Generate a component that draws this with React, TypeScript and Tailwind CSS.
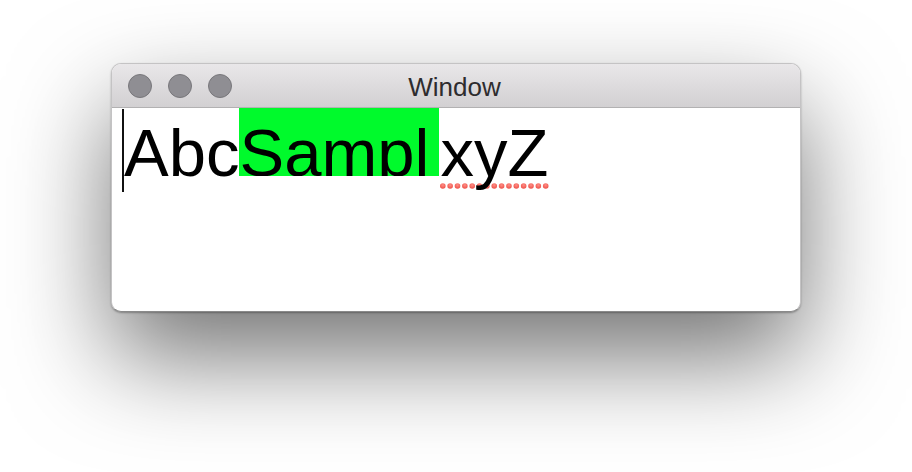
import React from "react";

function Dots() {
  const xs = Array.from({ length: 15 }, (_, i) => 2.8 + i * 7.35);
  return (
    <svg width="112" height="6" viewBox="0 0 112 6" className="block">
      <defs>
        <radialGradient id="dg" cx="50%" cy="35%" r="60%">
          <stop offset="0%" stopColor="#ff8d85" />
          <stop offset="100%" stopColor="#ee544c" />
        </radialGradient>
      </defs>
      {xs.map((x, i) => (
        <circle key={i} cx={x} cy={3} r={2.8} fill="url(#dg)" />
      ))}
    </svg>
  );
}

export default function App() {
  return (
    <div className="w-[912px] h-[472px] bg-white pt-[63px] pl-[111px] overflow-hidden">
      <div
        className="w-[690px] h-[249px] rounded-[10px] bg-white flex flex-col overflow-hidden border border-[#c4c3c4] border-b-[#8a8a8a] shadow-[0_45px_100px_rgba(0,0,0,0.55),0_1px_2px_rgba(0,0,0,0.3)]"
        style={{ fontFamily: '"Liberation Sans", Arial, sans-serif' }}
      >
        <div className="h-[44px] shrink-0 grid grid-cols-[1fr_auto_1fr] items-center bg-gradient-to-b from-[#e9e7e9] to-[#d2d0d2] border-b border-[#b2b1b2]">
          <div className="flex items-center gap-[16px] pl-[16px]">
            <div className="w-[24px] h-[24px] rounded-full bg-[#8f8e93] border border-[#78777b]" />
            <div className="w-[24px] h-[24px] rounded-full bg-[#8f8e93] border border-[#78777b]" />
            <div className="w-[24px] h-[24px] rounded-full bg-[#8f8e93] border border-[#78777b]" />
          </div>
          <div className="text-[26px] leading-none text-[#2e2c2e] pt-[3px] pr-[3px]">Window</div>
          <div />
        </div>
        <div className="flex-1 flex items-start pl-[10px] text-[67px] leading-[90px] text-black">
          <div className="w-[2px] h-[83px] mt-[1px] bg-[#111]" />
          <div className="whitespace-pre">Abc</div>
          <div className="w-[200px] h-[68px] overflow-hidden bg-[#00fa2c] whitespace-pre">Sampl</div>
          <div className="relative whitespace-pre ml-[1px]">
            <div className="absolute left-[0px] top-[75px]">
              <Dots />
            </div>
            <span className="relative">xyZ</span>
          </div>
        </div>
      </div>
    </div>
  );
}
